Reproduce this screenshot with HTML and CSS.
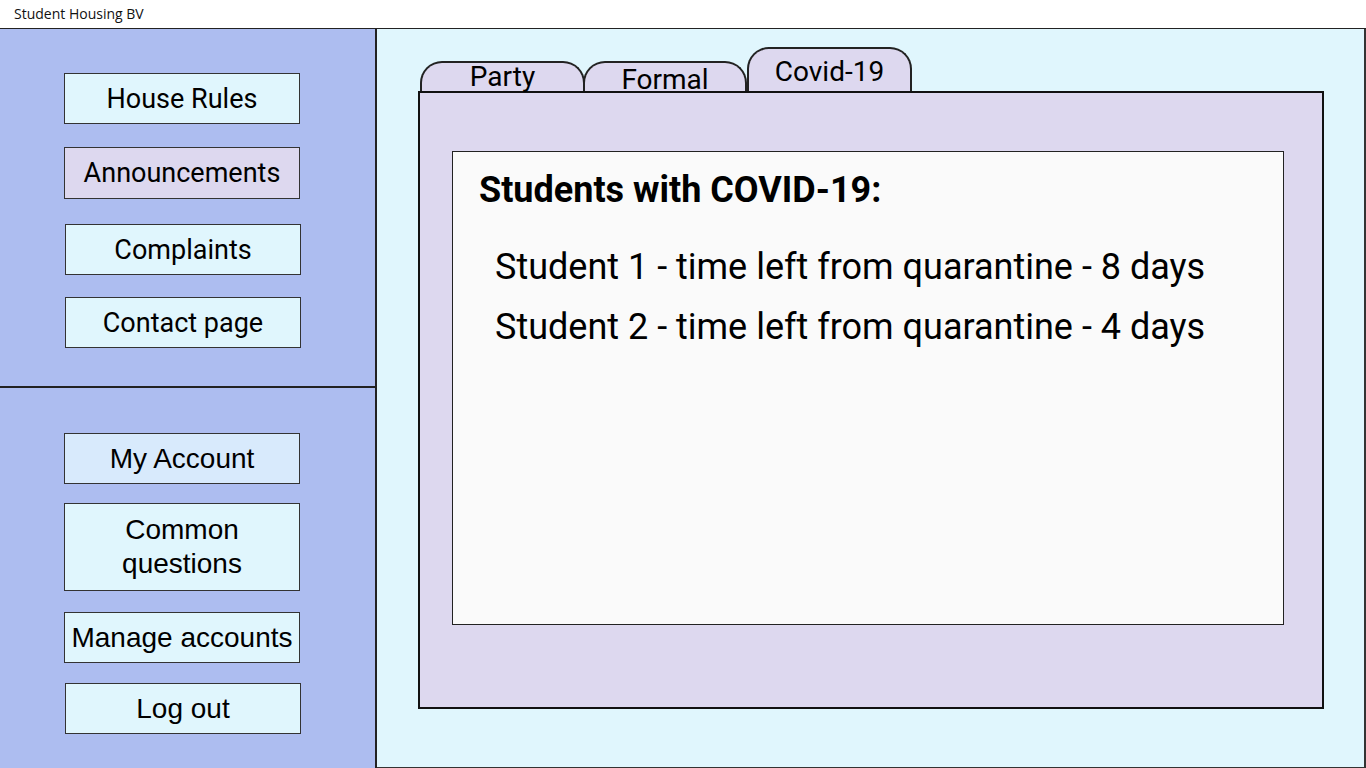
FILE: index.html
```html
<!DOCTYPE html>
<html>
<head>
<meta charset="utf-8">
<title>Student Housing BV</title>
<link rel="stylesheet" href="styles.css">
</head>
<body>
<div class="titlebar">Student Housing BV</div>
<div class="app">
  <aside class="sidebar">
    <nav class="section top">
      <div class="btn light">House Rules</div>
      <div class="btn active">Announcements</div>
      <div class="btn light shift">Complaints</div>
      <div class="btn light shift">Contact page</div>
    </nav>
    <nav class="section bottom">
      <div class="btn arial account">My Account</div>
      <div class="btn arial light tall">Common<br>questions</div>
      <div class="btn arial light">Manage accounts</div>
      <div class="btn arial light shift">Log out</div>
    </nav>
  </aside>
  <main class="main">
    <div class="tabs">
      <div class="tab tab-party">Party</div>
      <div class="tab tab-formal">Formal</div>
      <div class="tab tab-covid">Covid-19</div>
    </div>
    <section class="panel">
      <div class="card">
        <h1 class="card-title">Students with COVID-19:</h1>
        <p class="item">Student 1 - time left from quarantine - 8 days</p>
        <p class="item">Student 2 - time left from quarantine - 4 days</p>
      </div>
    </section>
  </main>
</div>
</body>
</html>
```
FILE: styles.css
```css
* { box-sizing: border-box; }
html, body { margin: 0; padding: 0; }
body {
  width: 1366px;
  height: 768px;
  overflow: hidden;
  background: #ffffff;
  font-family: Roboto, "Liberation Sans", sans-serif;
  color: #000;
}
.titlebar {
  height: 29px;
  padding: 4px 0 0 14px;
  font-family: "Open Sans", "Noto Sans", sans-serif;
  font-size: 14px;
  line-height: 19px;
  color: #111;
  background: #fff;
  border-bottom: 1px solid #222;
}
.app {
  display: flex;
  height: 739px;
}
.sidebar {
  width: 377px;
  background: #adbdf0;
  border-right: 2px solid #222;
  display: flex;
  flex-direction: column;
}
.section {
  display: flex;
  flex-direction: column;
  padding-left: 64px;
}
.section.top {
  height: 359px;
  padding-top: 44px;
  border-bottom: 2px solid #222;
}
.section.top .btn:nth-child(2) { margin-top: 23px; height: 52px; }
.section.top .btn:nth-child(3) { margin-top: 25px; }
.section.top .btn:nth-child(4) { margin-top: 22px; }
.section.bottom {
  padding-top: 45px;
}
.section.bottom .btn:nth-child(2) { margin-top: 19px; }
.section.bottom .btn:nth-child(3) { margin-top: 21px; }
.section.bottom .btn:nth-child(4) { margin-top: 20px; }
.btn {
  width: 236px;
  height: 51px;
  border: 1px solid #333;
  display: flex;
  align-items: center;
  justify-content: center;
  text-align: center;
  font-size: 27px;
  line-height: 34px;
  color: #000;
}
.btn.arial {
  font-family: "Liberation Sans", Arial, sans-serif;
  font-size: 28px;
}
.btn.shift { margin-left: 1px; }
.btn.light { background: #e0f6fd; }
.btn.active { background: #ddd8ef; }
.btn.account { background: #d8eafc; }
.btn.tall { height: 88px; }
.main {
  flex: 1;
  background: #e0f6fd;
  border-right: 2px solid #333;
  border-bottom: 1px solid #333;
  padding: 18px 0 0 41px;
}
.tabs {
  display: flex;
  align-items: flex-end;
  height: 44px;
  padding-left: 2px;
}
.tab {
  background: #ddd8ef;
  border: 2px solid #222;
  border-bottom: none;
  border-radius: 22px 22px 0 0;
  font-size: 28px;
  display: flex;
  justify-content: center;
  text-align: center;
}
.tab-party {
  width: 165px;
  height: 30px;
  line-height: 28px;
  margin-right: -2px;
}
.tab-formal {
  width: 164px;
  height: 30px;
  line-height: 34px;
}
.tab-covid {
  width: 165px;
  height: 44px;
  line-height: 46px;
}
.panel {
  width: 906px;
  height: 618px;
  background: #ddd8ef;
  border: 2px solid #111;
  padding: 58px 0 0 32px;
}
.card {
  width: 832px;
  height: 474px;
  background: #fafafa;
  border: 1px solid #222;
  padding: 16px 0 0 26px;
}
.card-title {
  margin: 0 0 33px 0;
  font-size: 36px;
  font-weight: 700;
  line-height: 44px;
}
.item {
  margin: 0 0 16px 16px;
  font-size: 36px;
  line-height: 44px;
}
```
